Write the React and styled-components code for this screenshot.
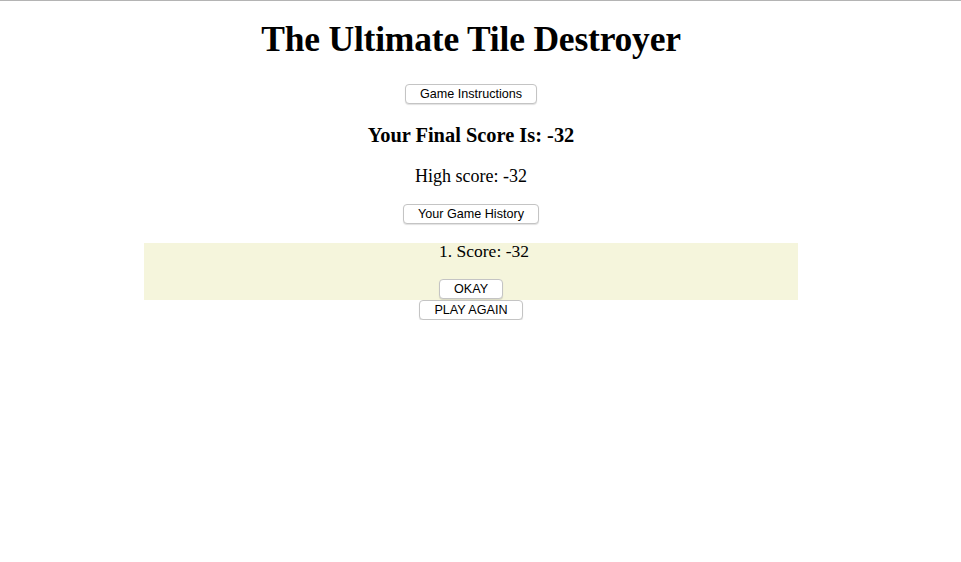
import React from "react";
import styled, { createGlobalStyle } from "styled-components";

const GlobalStyle = createGlobalStyle`
  html, body {
    margin: 0;
    padding: 0;
    background: #fff;
  }
  body {
    font-family: "Liberation Serif", "Times New Roman", serif;
    color: #000;
    border-top: 1px solid #b4b4b4;
  }
`

const Page = styled.div`
  width: 942px;
  display: flex;
  flex-direction: column;
  align-items: center;
  text-align: center;
`

const Title = styled.h1`
  font-size: 35.5px;
  font-weight: bold;
  margin: 18px 0 0;
  line-height: 41px;
  letter-spacing: -0.2px;
`

const Button = styled.button`
  font-family: "Liberation Sans", Arial, sans-serif;
  font-size: 12.6px;
  line-height: 14px;
  height: 20px;
  padding: 0 14px;
  margin-top: ${(p) => p.$top || 0}px;
  background: #fff;
  color: #000;
  border: 1px solid #c4c4c4;
  border-radius: 4px;
  box-shadow: 0 1px 1px rgba(0, 0, 0, 0.12);
`

const FinalScore = styled.h3`
  font-size: 20.4px;
  font-weight: bold;
  margin: 20px 0 0;
  line-height: 22px;
`

const HighScore = styled.p`
  font-size: 18px;
  margin: 20px 0 0;
  line-height: 20px;
`

const HistoryPanel = styled.div`
  width: 654px;
  margin-top: 19px;
  height: 57px;
  background: #f5f5dc;
  display: flex;
  flex-direction: column;
  align-items: center;
`

const HistoryList = styled.ol`
  margin: -2px 0 0;
  padding: 0 0 0 26px;
  list-style-position: inside;
  font-size: 17.5px;
  line-height: 20px;
`

const HistoryItem = styled.li``

const App = () => {
  const history = [-32];
  return (
    <>
      <GlobalStyle />
      <Page>
        <Title>The Ultimate Tile Destroyer</Title>
        <Button $top={24}>Game Instructions</Button>
        <FinalScore>Your Final Score Is: -32</FinalScore>
        <HighScore>High score: -32</HighScore>
        <Button $top={18}>Your Game History</Button>
        <HistoryPanel>
          <HistoryList>
            {history.map((score, i) => (
              <HistoryItem key={i}>Score: {score}</HistoryItem>
            ))}
          </HistoryList>
          <Button $top={18}>OKAY</Button>
        </HistoryPanel>
        <Button>PLAY AGAIN</Button>
      </Page>
    </>
  );
};

export default App;
